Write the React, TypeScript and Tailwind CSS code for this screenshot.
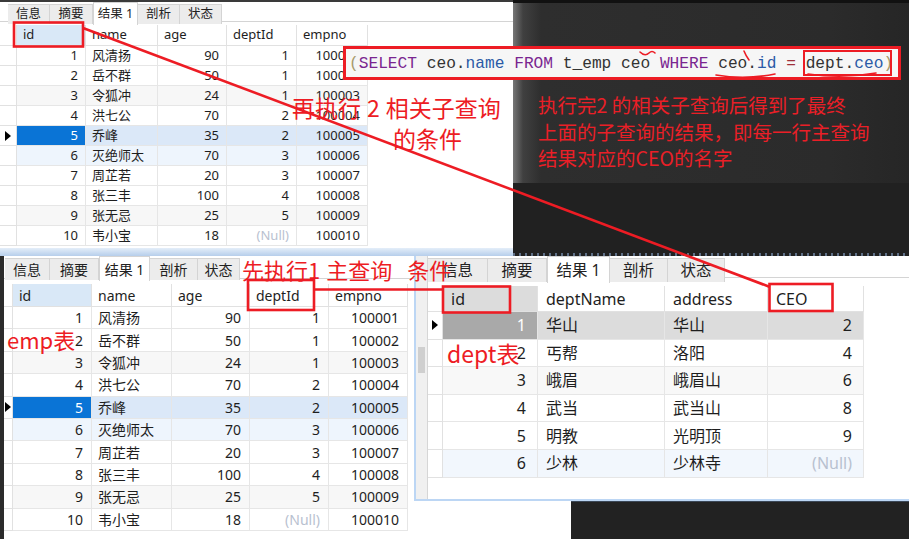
import { Fragment } from "react";

type Cell = string | number | null;

const emp: Cell[][] = [
  [1, "风清扬", 90, 1, 100001],
  [2, "岳不群", 50, 1, 100002],
  [3, "令狐冲", 24, 1, 100003],
  [4, "洪七公", 70, 2, 100004],
  [5, "乔峰", 35, 2, 100005],
  [6, "灭绝师太", 70, 3, 100006],
  [7, "周芷若", 20, 3, 100007],
  [8, "张三丰", 100, 4, 100008],
  [9, "张无忌", 25, 5, 100009],
  [10, "韦小宝", 18, null, 100010],
];

const dept: Cell[][] = [
  [1, "华山", "华山", 2],
  [2, "丐帮", "洛阳", 4],
  [3, "峨眉", "峨眉山", 6],
  [4, "武当", "武当山", 8],
  [5, "明教", "光明顶", 9],
  [6, "少林", "少林寺", null],
];

const tabs = ["信息", "摘要", "结果 1", "剖析", "状态"];

function Tabs({ grid, h, text, pad }: { grid: string; h: string; text: string; pad: string }) {
  return (
    <div className={`flex ${h} ${pad} border-b border-[#d4d4d4] bg-white`}>
      <div className={`grid ${grid} h-full ${text} text-[#222]`}>
        {tabs.map((t, i) =>
          i === 2 ? (
            <div key={t} className="h-[calc(100%+1px)] flex items-center justify-center bg-white border-x border-t border-[#d4d4d4]">
              {t}
            </div>
          ) : (
            <div key={t} className="mt-[2px] flex items-center justify-center bg-[#ececec] border-r border-t border-[#d4d4d4]">
              {t}
            </div>
          )
        )}
      </div>
    </div>
  );
}

function Arrow() {
  return <div className="w-0 h-0 border-y-[5px] border-y-transparent border-l-[6px] border-l-black" />;
}

function DataGrid({
  cols,
  headH,
  rowH,
  text,
  headers,
  rows,
  right,
  padL,
  padR,
  idHead,
  rowBg,
  idSel,
  selRow,
}: {
  cols: string;
  headH: string;
  rowH: string;
  text: string;
  headers: string[];
  rows: Cell[][];
  right: boolean[];
  padL: string;
  padR: string;
  idHead: string;
  rowBg: (i: number) => string;
  idSel: string;
  selRow: number;
}) {
  return (
    <div className={`grid ${cols} ${text} text-[#1e1e1e] self-start`}>
      <div className={`${headH} border-r border-b border-[#e1e1e1] bg-white`} />
      {headers.map((h, i) => (
        <div
          key={h}
          className={`${headH} flex items-center ${padL} border-r border-b border-[#e1e1e1] ${i === 0 ? idHead : "bg-white"}`}
        >
          {h}
        </div>
      ))}
      {rows.map((r, ri) => (
        <Fragment key={ri}>
          <div className={`${rowH} flex items-center justify-center border-r border-b border-[#e1e1e1] bg-white`}>
            {ri === selRow ? <Arrow /> : null}
          </div>
          {r.map((c, ci) => (
            <div
              key={ci}
              className={`${rowH} flex items-center whitespace-nowrap border-r border-b border-[#e6e6e6] ${
                right[ci] ? `justify-end ${padR}` : padL
              } ${ci === 0 && ri === selRow ? idSel : rowBg(ri)} ${c === null ? "text-[#b8c1d0]" : ""}`}
            >
              {c === null ? "(Null)" : c}
            </div>
          ))}
        </Fragment>
      ))}
    </div>
  );
}

const empRowBg = (i: number) =>
  i === 4 ? "bg-[#dbe8f8]" : i === 5 ? "bg-[#eef5fd]" : i === 2 || i === 8 ? "bg-[#f7f7f7]" : "bg-white";

const deptRowBg = (i: number) =>
  i === 0 ? "bg-[#dcdcdc]" : i === 5 ? "bg-[#f2f7fd]" : i === 2 ? "bg-[#f8f8f8]" : "bg-white";

export default function App() {
  return (
    <div className="relative w-[909px] h-[539px] overflow-hidden bg-white font-['Noto_Sans','Noto_Sans_CJK_SC',sans-serif]">
      {/* top half */}
      <div className="flex h-[256px]">
        <div className="w-[513px] flex flex-col bg-white">
          <div className="h-[2px] bg-[#3a3a3a]" />
          <Tabs grid="grid-cols-[42px_43px_45px_42px_42px]" h="h-[20px]" text="text-[12.5px]" pad="pl-[8px]" />
          <div className="h-[3px]" />
          <DataGrid
            cols="grid-cols-[17px_69px_72px_69px_70px_71px]"
            headH="h-[21px]"
            rowH="h-[20px]"
            text="text-[13px]"
            headers={["id", "name", "age", "deptId", "empno"]}
            rows={emp}
            right={[true, false, true, true, true]}
            padL="pl-[6px]"
            padR="pr-[7px]"
            idHead="bg-[#d9e8f7]"
            rowBg={empRowBg}
            idSel="bg-[#0a74d6] text-white"
            selRow={4}
          />
          <div className="flex-1" />
          <div className="h-[8px] bg-gradient-to-b from-[#e4eef9] to-[#b6ceeb]" />
        </div>

        <div className="flex-1 flex flex-col bg-[#212121]">
          <div className="h-[3px] bg-[#111]" />
          <div className="h-[180px] pl-[25px] pt-[89px] bg-[linear-gradient(90deg,#777_0px,#404040_10px,#2e2e2e_28px,#2b2b2b_80%,#262626_100%)] text-[#ea1f27] text-[19.5px] leading-[26.5px] font-['Noto_Sans_CJK_SC',sans-serif]">
            <div>执行完2 的相关子查询后得到了最终</div>
            <div>上面的子查询的结果，即每一行主查询</div>
            <div>结果对应的CEO的名字</div>
          </div>
          <div className="flex-1 flex flex-col justify-end">
            <div className="h-[3px] opacity-50 bg-[repeating-linear-gradient(90deg,#9dbfee_0px,#9dbfee_2px,transparent_2px,transparent_6px)]" />
          </div>
        </div>
      </div>

      {/* bottom half */}
      <div className="flex h-[283px]">
        <div className="w-[414px] flex bg-white">
          <div className="w-[4px] bg-[#2b2b2b]" />
          <div className="flex-1 flex flex-col">
            <Tabs grid="grid-cols-[45px_49px_51px_48px_42px]" h="h-[23px]" text="text-[14px]" pad="pl-[1px]" />
            <div className="h-[5px]" />
            <DataGrid
              cols="grid-cols-[9px_79px_80px_78px_79px_79px]"
              headH="h-[23px]"
              rowH="h-[22.4px]"
              text="text-[14px]"
              headers={["id", "name", "age", "deptId", "empno"]}
              rows={emp}
              right={[true, false, true, true, true]}
              padL="pl-[6px]"
              padR="pr-[8px]"
              idHead="bg-[#d9e8f7]"
              rowBg={empRowBg}
              idSel="bg-[#0a74d6] text-white"
              selRow={4}
            />
          </div>
        </div>

        <div className="flex-1 flex flex-col">
          <div className="h-[245px] flex bg-white border-b-2 border-[#bcd6f4]">
            <div className="w-[14px] flex flex-col border-l-2 border-[#bcd6f4] border-r border-r-[#d6d6d6] bg-[#f0f0f0]">
              <div className="mt-[91px] mx-[2px] h-[26px] bg-[#cfcfcf]" />
            </div>
            <div className="flex-1 flex flex-col">
              <Tabs grid="grid-cols-[60px_59px_63px_58px_57px]" h="h-[22px]" text="text-[15.5px]" pad="pl-0" />
              <div className="h-[8px]" />
              <DataGrid
                cols="grid-cols-[15px_95px_127px_103px_96px]"
                headH="h-[26px]"
                rowH="h-[27.6px]"
                text="text-[16px]"
                headers={["id", "deptName", "address", "CEO"]}
                rows={dept}
                right={[true, false, false, true]}
                padL="pl-[8px]"
                padR="pr-[11px]"
                idHead="bg-[#dcdcdc]"
                rowBg={deptRowBg}
                idSel="bg-[#a9a9a9] text-white"
                selRow={0}
              />
            </div>
          </div>
          <div className="flex-1 flex">
            <div className="w-[157px] bg-white" />
            <div className="flex-1 bg-[#222] border-t border-[#3b4756]" />
          </div>
        </div>
      </div>

      {/* SQL snippet pasted over the picture */}
      <div className="absolute left-[343px] top-[46px] w-[558px] h-[34px] border-[3px] border-[#ed1c24] bg-[#f6f6f6] flex items-center pl-[3px] pt-[3px] font-['Liberation_Mono',monospace] text-[16.2px] whitespace-pre text-[#333]">
        <span className="text-[#a89a6a]">(</span>
        <span className="text-[#7a2590]">SELECT</span>
        <span> ceo.</span>
        <span className="text-[#2b5aa6]">name</span>
        <span> </span>
        <span className="text-[#7a2590]">FROM</span>
        <span> t_emp ceo </span>
        <span className="text-[#7a2590]">WHERE</span>
        <span> ceo.</span>
        <span className="text-[#2b5aa6]">id</span>
        <span className="text-[#a0303a]"> = </span>
        <span>dept.</span>
        <span className="text-[#2b5aa6]">ceo</span>
        <span className="text-[#a89a6a]">)</span>
      </div>
      <div className="absolute left-[803px] top-[50px] w-[89px] h-[26px] border-2 border-[#ed1c24]" />

      {/* red notes */}
      <div className="absolute left-[292px] top-[96px] flex gap-[6px] text-[23px] leading-none text-[#ed1c24] font-['Noto_Sans_CJK_SC',sans-serif]">
        <span>再执行</span>
        <span>2</span>
        <span>相关子查询</span>
      </div>
      <div className="absolute left-[393px] top-[127px] text-[23px] leading-none text-[#ed1c24] font-['Noto_Sans_CJK_SC',sans-serif]">
        的条件
      </div>
      <div className="absolute left-[242px] top-[258px] flex text-[22px] leading-none text-[#ed1c24] font-['Noto_Sans_CJK_SC',sans-serif]">
        <span>先执行1</span>
        <span className="ml-[6px]">主查询</span>
        <span className="ml-[15px]">条件</span>
      </div>
      <div className="absolute left-[7px] top-[328px] text-[22px] leading-none text-[#ed1c24] font-['Noto_Sans_CJK_SC',sans-serif]">
        emp表
      </div>
      <div className="absolute left-[447px] top-[342px] text-[23px] leading-none text-[#ed1c24] font-['Noto_Sans_CJK_SC',sans-serif]">
        dept表
      </div>

      <svg className="absolute inset-0 pointer-events-none" width="909" height="539" viewBox="0 0 909 539" fill="none">
        <g stroke="#ed1c24" strokeWidth="2.6">
          <rect x="14" y="22.5" width="69" height="24" />
          <line x1="83" y1="28" x2="770" y2="287" />
          <rect x="248" y="280" width="66" height="30" />
          <line x1="314" y1="289.5" x2="444" y2="289.5" />
          <rect x="443" y="286.5" width="67" height="26" />
          <rect x="769.5" y="284" width="63" height="27" />
        </g>
        <g stroke="#ed1c24" strokeWidth="1.6" strokeLinecap="round">
          <path d="M716 75 Q 745 80 775 74" />
          <path d="M808 74 Q 842 79 876 73" />
          <path d="M640 52 Q 645 57 649 53 Q 652 50 655 53" />
          <path d="M744 51 Q 746 56 749 60" />
        </g>
      </svg>
    </div>
  );
}
